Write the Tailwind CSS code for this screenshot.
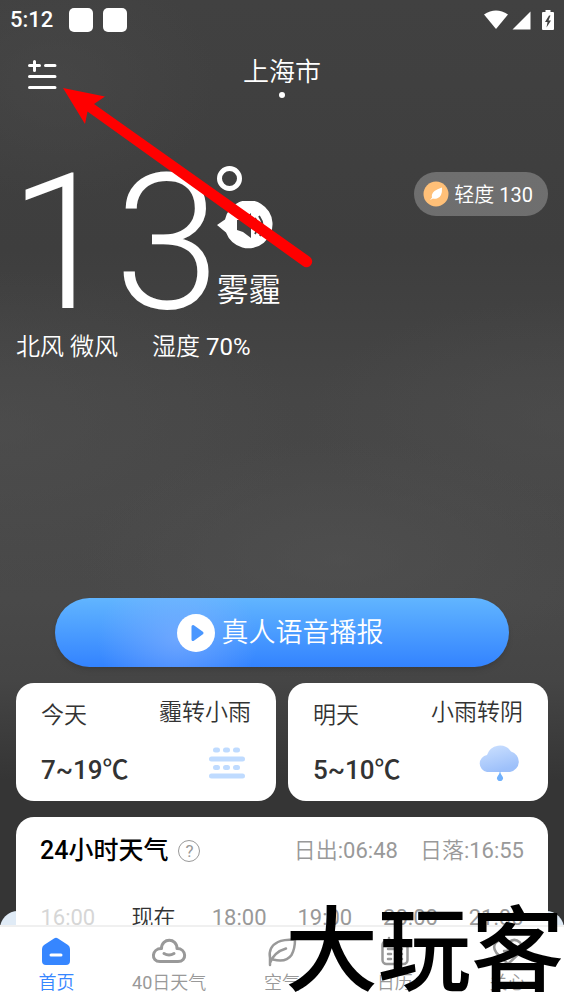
<!DOCTYPE html>
<html lang="zh-CN">
<head>
<meta charset="utf-8">
<meta name="viewport" content="width=device-width, initial-scale=1">
<title>上海市天气</title>
<script src="https://cdn.jsdelivr.net/npm/@tailwindcss/browser@4"></script>
</head>
<body class="relative flex h-screen flex-col overflow-hidden bg-[#353535] bg-[radial-gradient(ellipse_260px_120px_at_60%_560px,#52525299,transparent),radial-gradient(ellipse_300px_160px_at_0%_430px,#50505088,transparent),radial-gradient(ellipse_260px_120px_at_100%_420px,#4e4e4e88,transparent),radial-gradient(ellipse_160px_120px_at_10%_80px,#4a4a4a88,transparent),linear-gradient(to_bottom,#414141_0px,#3e3e3e_250px,#464646_400px,#494949_600px,#454545_680px,#353535_780px)] font-['Roboto','Noto_Sans_CJK_SC_DemiLight','Noto_Sans_CJK_SC',sans-serif] text-white">

<!-- status bar -->
<div class="flex h-10 shrink-0 items-center pl-[10px] pr-[10px]">
  <span class="text-[22px] leading-6 font-medium">5:12</span>
  <span class="ml-4 size-6 rounded-[5px] bg-white"></span>
  <span class="ml-[10px] size-6 rounded-[5px] bg-white"></span>
  <svg class="ml-auto" width="24" height="20" viewBox="0 0 24 20" fill="#fff"><path d="M0 4.500Q12-3.500 24 4.500L12 19z"/></svg>
  <svg class="ml-1" width="19" height="19" viewBox="0 0 19 19" fill="#fff"><path d="M18.500 .5V18.500H.5z"/></svg>
  <svg class="ml-[11px]" width="12" height="20" viewBox="0 0 12 20"><path fill="#fff" d="M3.500 0h5v2H11q1 0 1 1v16q0 1-1 1H1q-1 0-1-1V3q0-1 1-1h2.500z"/><path fill="#424242" d="M7 5.500L3 12h2.500L4.500 17.500 9 10.500H6.500L8.500 5.500z"/></svg>
</div>

<!-- city header -->
<header class="grid h-[115px] shrink-0 grid-cols-3 items-start px-7 pt-4">
  <button type="button" aria-label="城市管理" class="mt-1 w-[29px]">
    <svg width="29" height="30" viewBox="0 0 29 30" fill="none" stroke="#fff" stroke-width="3" stroke-linecap="round"><path d="M1.500 5.500H11.500M6.500 1.500V10.500M17.500 5.500H27M1.500 16.500H27M1.500 27.500H27"/></svg>
  </button>
  <div class="flex flex-col items-center">
    <h1 class="text-[26px] leading-8">上海市</h1>
    <span class="mt-1 size-[6px] rounded-full bg-white"></span>
  </div>
</header>

<!-- current weather -->
<section class="flex shrink-0 items-start pr-4 pl-[9px]">
  <div class="-mr-[3px] text-[190px] leading-[176px] font-light">13</div>
  <div class="mt-[11px] flex flex-col items-start">
    <span class="size-[25px] rounded-full border-[5px] border-white"></span>
    <button type="button" aria-label="播放语音" class="mt-[10px]">
      <svg width="56" height="49" viewBox="0 0 56 49"><path fill="#fff" d="M0 24L8 18.500A24 24 0 1 1 9 31.500z"/><path fill="#414141" d="M20 19h6l8-7v25l-8-6-6-2z"/><path d="M38 17q5 8 0 16M42 15q7 10 1 20" fill="none" stroke="#414141" stroke-width="2"/></svg>
    </button>
    <span class="mt-5 text-[32px] leading-10">雾霾</span>
  </div>
  <a href="#air" class="mt-[17px] ml-auto flex h-11 items-center gap-[5px] rounded-full bg-white/25 pr-[15px] pl-[9px] text-[20px]">
    <svg width="26" height="26" viewBox="0 0 26 26"><circle cx="13" cy="13" r="12.500" fill="#ffc078"/><path fill="#fff" d="M19 6.500Q19.500 16 14 17.500 11 18 10 17.500L7 19 9 16.500Q8 13 11.500 10 14 8 19 6.500z"/></svg>
    <span class="pt-px">轻度 130</span>
  </a>
</section>
<div class="flex shrink-0 gap-[34px] px-4 text-[24px] leading-8"><span>北风 微风</span><span>湿度 70%</span></div>

<!-- forecast -->
<main class="flex min-h-0 flex-1 flex-col overflow-hidden pt-[235px]">
  <button type="button" class="mx-[55px] flex h-[69px] shrink-0 items-center justify-center gap-[7px] rounded-full bg-[radial-gradient(ellipse_80px_70px_at_27%_60%,#8fb4ff88,transparent),linear-gradient(to_bottom,#61b5ff,#3383ff)] pr-1 text-[27px] shadow-md">
    <svg width="38" height="38" viewBox="0 0 38 38"><circle cx="19" cy="19" r="19" fill="#fff"/><path d="M16 12.500L25 19 16 25.500z" fill="#4a97ff" stroke="#4a97ff" stroke-width="3" stroke-linejoin="round"/></svg>
    <span class="pt-[2px]">真人语音播报</span>
  </button>

  <div class="mx-4 mt-4 grid shrink-0 grid-cols-2 gap-3 text-[23px] text-[#333]">
    <a href="#today" class="flex h-[118px] justify-between rounded-[18px] bg-white px-[25px]">
      <div class="flex flex-col pt-[17px]"><span class="leading-8">今天</span><span class="mt-[22px] font-['Roboto','Noto_Sans_CJK_SC',sans-serif] text-[26px] leading-8 font-medium">7~19℃</span></div>
      <div class="flex flex-col items-end pt-[14px]"><span class="leading-8">霾转小雨</span>
        <svg class="mt-[18px] mr-[6px]" width="36" height="32" viewBox="0 0 36 32" fill="none" stroke="#bfdbff" stroke-width="5" stroke-linecap="round"><path d="M2.500 12H33.500M2.500 29H33.500M6.500 3H8.500M16.500 3H18.500M26.500 3H28.500M6.500 20.500H8.500M16.500 20.500H18.500M26.500 20.500H28.500"/></svg>
      </div>
    </a>
    <a href="#tomorrow" class="flex h-[118px] justify-between rounded-[18px] bg-white px-[25px]">
      <div class="flex flex-col pt-[17px]"><span class="leading-8">明天</span><span class="mt-[22px] font-['Roboto','Noto_Sans_CJK_SC',sans-serif] text-[26px] leading-8 font-medium">5~10℃</span></div>
      <div class="flex flex-col items-end pt-[14px]"><span class="leading-8">小雨转阴</span>
        <svg class="mt-4 mr-[3px]" width="42" height="36" viewBox="0 0 42 36"><defs><linearGradient id="cloud" x1="0" y1="0" x2=".4" y2="1"><stop stop-color="#cde1ff"/><stop offset="1" stop-color="#9dc0fa"/></linearGradient></defs><path fill="url(#cloud)" d="M9 27A8.600 8.600 0 0 1 9 10 13.500 13.500 0 0 1 33 6.500 10.500 10.500 0 0 1 32 27z"/><path fill="#71b1fc" d="M22 26Q22.500 29 24.500 31.500A3 3 0 1 1 19.500 31.500Q21.500 29 22 26z"/></svg>
      </div>
    </a>
  </div>

  <div class="relative mt-4 min-h-0 flex-1">
    <div class="absolute inset-x-0 top-[94px] h-10 rounded-t-[18px] bg-[#e0ebf6]"></div>
    <section class="relative mx-4 h-[200px] rounded-t-[18px] bg-white px-[9px] pt-[18px] text-[22px]">
      <div class="flex items-center px-[15px] leading-8 text-[#999]">
        <h2 class="font-['Roboto','Noto_Sans_CJK_SC',sans-serif] text-[25px] font-medium text-black">24小时天气</h2>
        <button type="button" aria-label="说明" class="ml-[10px] flex size-[22px] items-center justify-center rounded-full border border-[#999] text-[17px] leading-none">?</button>
        <span class="ml-auto">日出:06:48</span><span class="ml-[22px]">日落:16:55</span>
      </div>
      <div class="mt-[35px] grid grid-cols-6 text-center leading-8 text-[#999]">
        <span class="text-[#d6d6d6]">16:00</span><span class="text-[#333]">现在</span><span>18:00</span><span>19:00</span><span>20:00</span><span>21:00</span>
      </div>
    </section>
  </div>
</main>

<!-- tab bar -->
<nav class="relative grid h-[77px] shrink-0 grid-cols-5 border-t-2 border-[#f0f0f0] bg-white text-[18px] leading-6 text-[#999]">
  <a href="#home" class="flex flex-col items-center pt-[9px] text-[#3686ff]">
    <svg width="32" height="32" viewBox="0 0 32 32"><path fill="#3686ff" d="M14 2.500Q16 1 18 2.500L28 9Q30 10.500 30 13V25Q30 29 26 29H6Q2 29 2 25V13Q2 10.500 4 9z"/><path d="M11 19H21" stroke="#fff" stroke-width="3" stroke-linecap="round"/></svg>
    <span class="mt-[3px]">首页</span>
  </a>
  <a href="#days" class="flex flex-col items-center pt-[9px]">
    <svg width="36" height="32" viewBox="0 0 36 32" fill="none" stroke="#999" stroke-width="3" stroke-linecap="round" stroke-linejoin="round"><path d="M9 25.500C-.5 25.500 .5 12.500 10.500 12.500C10.500 1.500 26 1.500 26 12.500C35.500 12.500 36.500 25.500 27 25.500ZM13 17.500Q18 20.500 23 17.500"/></svg>
    <span class="mt-[3px]">40日天气</span>
  </a>
  <a href="#air" class="flex flex-col items-center pt-[9px]">
    <svg width="32" height="32" viewBox="0 0 32 32" fill="none" stroke="#999" stroke-width="2.500" stroke-linecap="round" stroke-linejoin="round"><path d="M4 29V22Q2 11 12 6 17 3.500 29 3.500 29 13 25.500 19 20 27 7 23.500M4 27Q8 16 20 12.500"/></svg>
    <span class="mt-[3px]">空气</span>
  </a>
  <a href="#calendar" class="flex flex-col items-center pt-[9px]">
    <svg width="32" height="32" viewBox="0 0 32 32" fill="none" stroke="#999" stroke-width="2.500" stroke-linecap="round"><rect x="3.500" y="5" width="25" height="23" rx="4"/><path d="M10 2V7M22 2V7M9 13H23M9 18H12M16 18H18M22 18H23M9 23H12M16 23H18M22 23H23"/></svg>
    <span class="mt-[3px]">日历</span>
  </a>
  <a href="#care" class="flex flex-col items-center pt-[9px]">
    <svg width="32" height="32" viewBox="0 0 32 32" fill="none" stroke="#999" stroke-width="2.500" stroke-linecap="round" stroke-linejoin="round"><path d="M16 28L4.500 17Q0 11 4 6.500 10 1 16 7 22 1 28 6.500 32 11 27.500 17zM16 11V19M12 15H20"/></svg>
    <span class="mt-[3px]">关心</span>
  </a>
</nav>

<!-- pointer arrow and site mark over the page -->
<svg class="pointer-events-none absolute top-[80px] left-[56px]" width="264" height="194" viewBox="56 80 264 194" fill="#f00"><path d="M63 88L105 96.500 94 104 310 257A5.500 5.500 0 0 1 303 266L87.500 111.500 85 124z"/></svg>
<div class="pointer-events-none absolute right-0 bottom-2 font-['Noto_Sans_CJK_SC',sans-serif] text-[93px] leading-[100px] font-medium text-black">大玩客</div>
</body>
</html>
